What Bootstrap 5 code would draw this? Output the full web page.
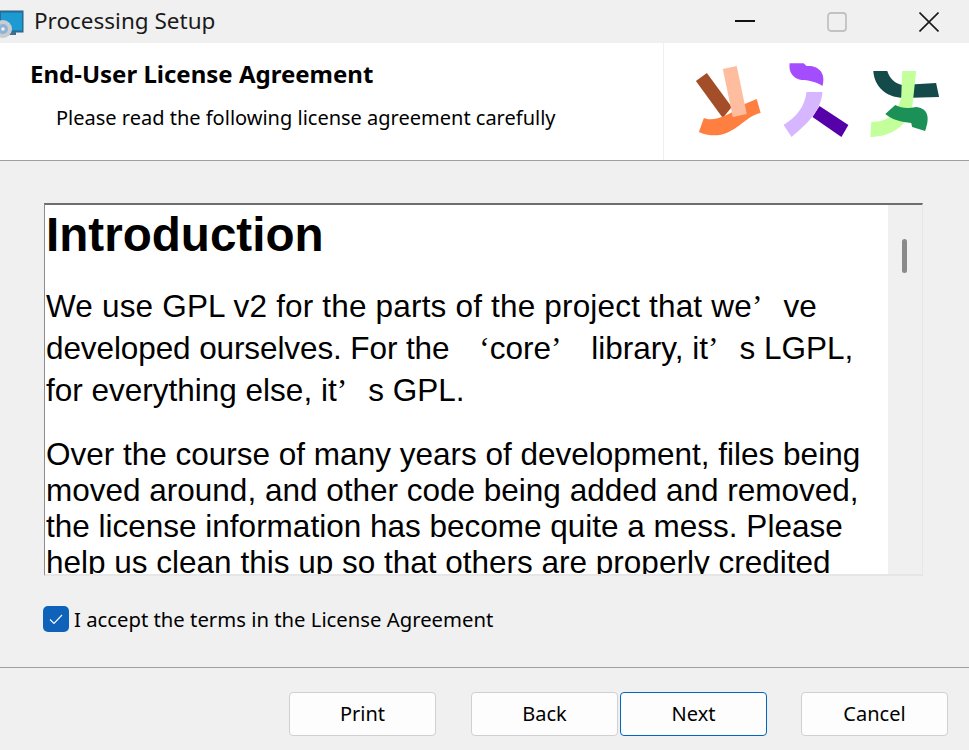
<!DOCTYPE html>
<html lang="en">
<head>
    <meta charset="UTF-8">
    <title>Processing Setup</title>
    <link href="https://cdn.jsdelivr.net/npm/bootstrap@5.3.3/dist/css/bootstrap.min.css" rel="stylesheet">
    <style>
        html, body {
            height: 750px;
            overflow: hidden;
        }
        body {
            background-color: #f0f0f0;
            color: #000;
            font-family: "Noto Sans", "Open Sans", sans-serif;
        }
        .title-bar {
            height: 43px;
        }
        .app-icon {
            width: 24px;
            height: 34px;
            margin-right: 10px;
        }
        .title-text {
            font-size: 22.5px;
            line-height: 30px;
            margin-top: -2px;
            color: #1a1a1a;
        }
        .win-controls {
            gap: 72px;
            padding-right: 30px;
        }
        .head-panel {
            height: 118px;
            background: #fff;
            border-bottom: 1px solid #a0a0a0;
        }
        .head-copy {
            padding: 15px 0 0 30px;
        }
        .head-title {
            font-size: 24px;
            font-weight: 700;
            line-height: 32px;
            margin: 0;
        }
        .head-sub {
            font-size: 20px;
            line-height: 30px;
            margin: 13px 0 0 26px;
        }
        .head-logo {
            width: 306px;
            height: 117px;
            border-left: 1px solid #f0f0f0;
        }
        .license-wrap {
            padding: 42px 46px 0 44px;
        }
        .license-box {
            height: 373px;
            background: #fff;
            border-top: 2px solid #6d6d6d;
            border-left: 1px solid #8c8c8c;
            border-right: 1px solid #e6e6e6;
            border-bottom: 2px solid #e6e6e6;
            overflow: hidden;
        }
        .license-text {
            padding: 0 0 0 1px;
            font-family: "Liberation Sans", Arial, sans-serif;
            font-size: 31.5px;
        }
        .license-text h1 {
            font-size: 47.6px;
            font-weight: 700;
            line-height: 52px;
            margin: 4px 0 0;
        }
        .para-wide {
            line-height: 42px;
            margin: 24px 0 0;
        }
        .para-tight {
            line-height: 36px;
            margin: 25px 0 0;
        }
        .line-stretch {
            letter-spacing: .18px;
        }
        .line-squeeze {
            letter-spacing: -.1px;
        }
        /* full-width quotes: the glyph sits at one side of a wide box */
        .quote-close,
        .quote-open {
            display: inline-block;
            width: 1em;
            font-family: "Liberation Serif", serif;
            line-height: 1;
        }
        .quote-close {
            text-align: left;
        }
        .quote-open {
            text-align: right;
        }
        .scroll-rail {
            width: 34px;
            background: #f0f0f0;
            padding: 34px 0 0 14px;
        }
        .scroll-thumb {
            width: 5px;
            height: 34px;
            background: #8a8a8a;
            border-radius: 3px;
        }
        .accept-row {
            margin: 30px 0 0 43px;
            gap: 5px;
            height: 26px;
        }
        .accept-row .form-check-input {
            width: 26px;
            height: 26px;
            margin: 0;
            border-radius: 5px;
            border: 0;
            background-color: #0f62b9;
            background-size: 16px;
            background-image: url("data:image/svg+xml,%3csvg xmlns='http://www.w3.org/2000/svg' viewBox='0 0 16 16'%3e%3cpath fill='none' stroke='%23fff' stroke-width='1.1' d='M2 8.5l4 4L14 4'/%3e%3c/svg%3e");
        }
        .accept-row .form-check-label {
            font-size: 20.3px;
            line-height: 30px;
        }
        .foot-bar {
            margin-top: 35px;
            border-top: 1px solid #a0a0a0;
            padding: 24px 21px 0 289px;
        }
        .wiz-btn {
            width: 147px;
            height: 44px;
            padding: 0;
            background: #fdfdfd;
            border: 1px solid #d0d0d0;
            border-radius: 4px;
            color: #000;
            font-size: 20px;
        }
        .wiz-btn.default-btn {
            border-color: #0067c0;
        }
        .gap-wide {
            margin-left: 35px;
        }
        .gap-narrow {
            margin-left: 34px;
        }
        .gap-tight {
            margin-left: 2px;
        }
    </style>
</head>
<body>
<div class="title-bar d-flex align-items-center">
    <svg class="app-icon" viewBox="0 0 24 34">
        <rect x="0" y="6" width="23" height="21" fill="#1f7fb3" stroke="#2c5d7c"/>
        <rect x="1" y="8" width="21" height="17" fill="#1c9ad1"/>
        <rect x="7" y="27" width="9" height="3" fill="#3f6f8c"/>
        <circle cx="3" cy="24" r="9" fill="#c9ccd0"/>
        <circle cx="3" cy="24" r="5" fill="#8fb2d6"/>
        <circle cx="3" cy="24" r="1.8" fill="#eef2f6"/>
    </svg>
    <span class="title-text">Processing Setup</span>
    <div class="win-controls d-flex align-items-center ms-auto">
        <svg width="20" height="20" viewBox="0 0 20 20"><rect y="8" width="20" height="2" fill="#111"/></svg>
        <svg width="20" height="20" viewBox="0 0 20 20"><rect x="1" y="1" width="18" height="18" rx="3" fill="none" stroke="#c2c2c2" stroke-width="1.8"/></svg>
        <svg width="20" height="20" viewBox="0 0 20 20"><path d="M0.5 0.5L19.5 19.5M19.5 0.5L0.5 19.5" stroke="#1a1a1a" stroke-width="1.6"/></svg>
    </div>
</div>

<div class="head-panel d-flex justify-content-between">
    <div class="head-copy">
        <p class="head-title">End-User License Agreement</p>
        <p class="head-sub">Please read the following license agreement carefully</p>
    </div>
    <svg class="head-logo" viewBox="664 43 306 117">
        <path d="M696 81L707 73L732 107L723 118Z" fill="#a34e28"/>
        <path d="M704 118C713 122 727 117 745 104L757 99L761 113C748 115 737 132 720 135C713 136 705 135 699 132Z" fill="#ff7f41"/>
        <path d="M723 69L737 66L747 114L733 117Z" fill="#ffbd9f"/>
        <path d="M790 63L804 63L807 66C818 65 827 72 823 86C817 82 808 80 802 80C793 78 789 72 790 63Z" fill="#a44dff"/>
        <path d="M820 106L849 125L842 137L813 117Z" fill="#5500a8"/>
        <path d="M807 92L823 92C822 110 807 125 792 137L784 125C797 117 805 107 807 92Z" fill="#d6b6ff"/>
        <path d="M874 71L888 71C890 78 896 84 903 85L937 83L940 97L903 98C887 97 875 87 874 71Z" fill="#144a4a"/>
        <path d="M903 71L917 71L913 108C908 125 893 137 871 137L872 122C890 122 898 113 902 97Z" fill="#c3ff9b"/>
        <path d="M886 114L896 105C902 108 908 109 917 107C927 108 932 115 926 131L913 127L912 123C902 122 893 120 886 114Z" fill="#1c9157"/>
    </svg>
</div>

<div class="license-wrap">
    <div class="license-box d-flex">
        <div class="license-text flex-grow-1">
            <h1>Introduction</h1>
            <p class="para-wide"><span class="line-stretch">We use GPL v2 for the parts of the project that we</span><span class="quote-close">’</span>ve <span class="line-squeeze">developed ourselves. For the</span> <span class="quote-open">‘</span>core<span class="quote-close">’</span> library, it<span class="quote-close">’</span>s LGPL, for everything else, it<span class="quote-close">’</span>s GPL.</p>
            <p class="para-tight">Over the course of many years of development, files being moved around, and other code being added and removed, the license information has become quite a mess. Please help us clean this up so that others are properly credited</p>
        </div>
        <div class="scroll-rail flex-shrink-0">
            <div class="scroll-thumb"></div>
        </div>
    </div>
</div>

<div class="accept-row form-check d-flex align-items-center p-0">
    <input class="form-check-input" type="checkbox" id="acceptTerms" checked>
    <label class="form-check-label" for="acceptTerms">I accept the terms in the License Agreement</label>
</div>

<div class="foot-bar d-flex">
    <button type="button" class="btn wiz-btn flex-shrink-0">Print</button>
    <button type="button" class="btn wiz-btn flex-shrink-0 gap-wide">Back</button>
    <button type="button" class="btn wiz-btn flex-shrink-0 default-btn gap-tight">Next</button>
    <button type="button" class="btn wiz-btn flex-shrink-0 gap-narrow">Cancel</button>
</div>

<script src="https://cdn.jsdelivr.net/npm/bootstrap@5.3.3/dist/js/bootstrap.bundle.min.js"></script>
</body>
</html>
